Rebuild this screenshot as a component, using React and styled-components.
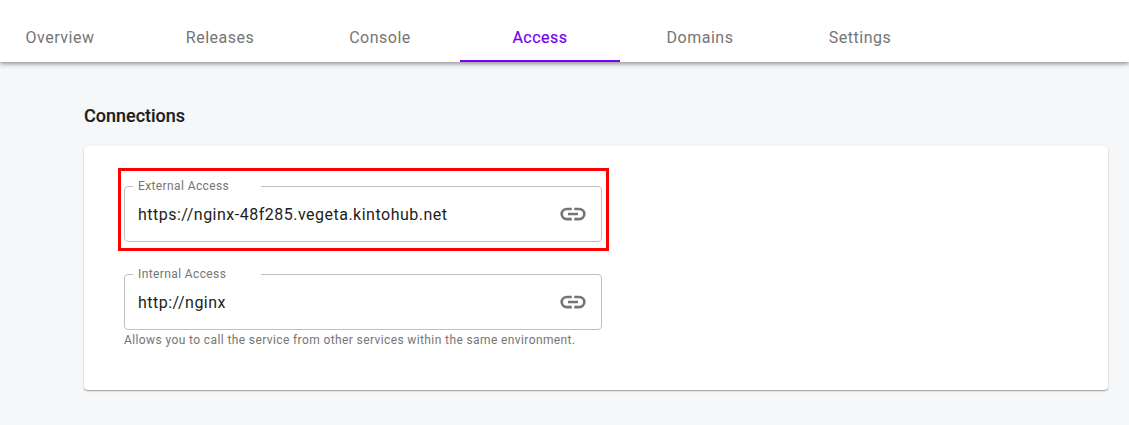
import React from 'react';
import styled, { createGlobalStyle } from 'styled-components';

const Global = createGlobalStyle`
  * { box-sizing: border-box; }
  body { margin: 0; background: #f5f7f9; font-family: Roboto, sans-serif; color: #1d1d20; overflow: hidden; }
`;
const Page = styled.div`height: 425px; overflow: hidden;`;
const Tabs = styled.nav`
  display: flex; height: 62px; padding-top: 14px; background: #fff;
  box-shadow: 0 2px 5px rgba(0,0,0,.32), 0 1px 4px rgba(0,0,0,.16);
`;
const Tab = styled.a`
  width: 160px; height: 48px; flex: none; display: flex; align-items: center; justify-content: center;
  font-size: 16px; letter-spacing: .5px;
  color: ${p => (p.$active ? '#7200f0' : '#757575')};
  -webkit-text-stroke: ${p => (p.$active ? '.2px' : '0')};
  border-bottom: 2px solid ${p => (p.$active ? '#7800ff' : 'transparent')};
  &:first-child { margin-left: -20px; }
`;
const Content = styled.main`padding: 42px 21px 0 84px;`;
const Title = styled.h2`margin: 0 0 18px; font-size: 18px; line-height: 24px; font-weight: 500; -webkit-text-stroke: .15px;`;
const Card = styled.section`
  height: 244px; padding: 22px 34px; background: #fff; border-radius: 4px;
  box-shadow: 0 1px 1px rgba(0,0,0,.28), 0 1px 3px rgba(0,0,0,.12);
`;
const Highlight = styled.div`
  width: 491px; height: 83px; padding: 8px 3px 0; border: 3px solid #f00;
`;
const Plain = styled.div`width: 491px; padding: 16px 6px 0;`;
const Field = styled.fieldset`
  width: 478px; height: 63px; margin: 0; padding: 0 13px; border: 1px solid #c0c0c0; border-radius: 4px;
`;
const Legend = styled.legend`
  width: 128px; height: 14px; margin-left: -5px; padding: 0 5px; font-size: 12px; line-height: 14px; letter-spacing: .39px; color: #757575;
`;
const Row = styled.div`
  display: flex; justify-content: space-between; align-items: center; height: 42px;
  font-size: 16px; letter-spacing: .495px;
`;
const Help = styled.p`margin: 3px 0 0; font-size: 12px; line-height: 15px; letter-spacing: .39px; color: #757575;`;
const LinkSvg = styled.svg`
  width: 30px; height: 30px; fill: none; stroke: #757575; stroke-width: 2.1;
`;

const LinkIcon = () => (
  <LinkSvg viewBox="0 0 24 24">
    <path d="M11 7.95H7a4.05 4.05 0 0 0 0 8.1h4M13 7.95h4a4.05 4.05 0 0 1 0 8.1h-4M8 12h8" />
  </LinkSvg>
);
const AccessField = ({ label, value }) => (
  <Field><Legend>{label}</Legend><Row><span>{value}</span><LinkIcon /></Row></Field>
);

export default function App() {
  return (
    <Page>
      <Global />
      <Tabs>
        {['Overview', 'Releases', 'Console', 'Access', 'Domains', 'Settings'].map(t => <Tab key={t} $active={t === 'Access'}>{t}</Tab>)}
      </Tabs>
      <Content>
        <Title>Connections</Title>
        <Card>
          <Highlight><AccessField label="External Access" value="https://nginx-48f285.vegeta.kintohub.net" /></Highlight>
          <Plain>
            <AccessField label="Internal Access" value="http://nginx" />
            <Help>Allows you to call the service from other services within the same environment.</Help>
          </Plain>
        </Card>
      </Content>
    </Page>
  );
}
